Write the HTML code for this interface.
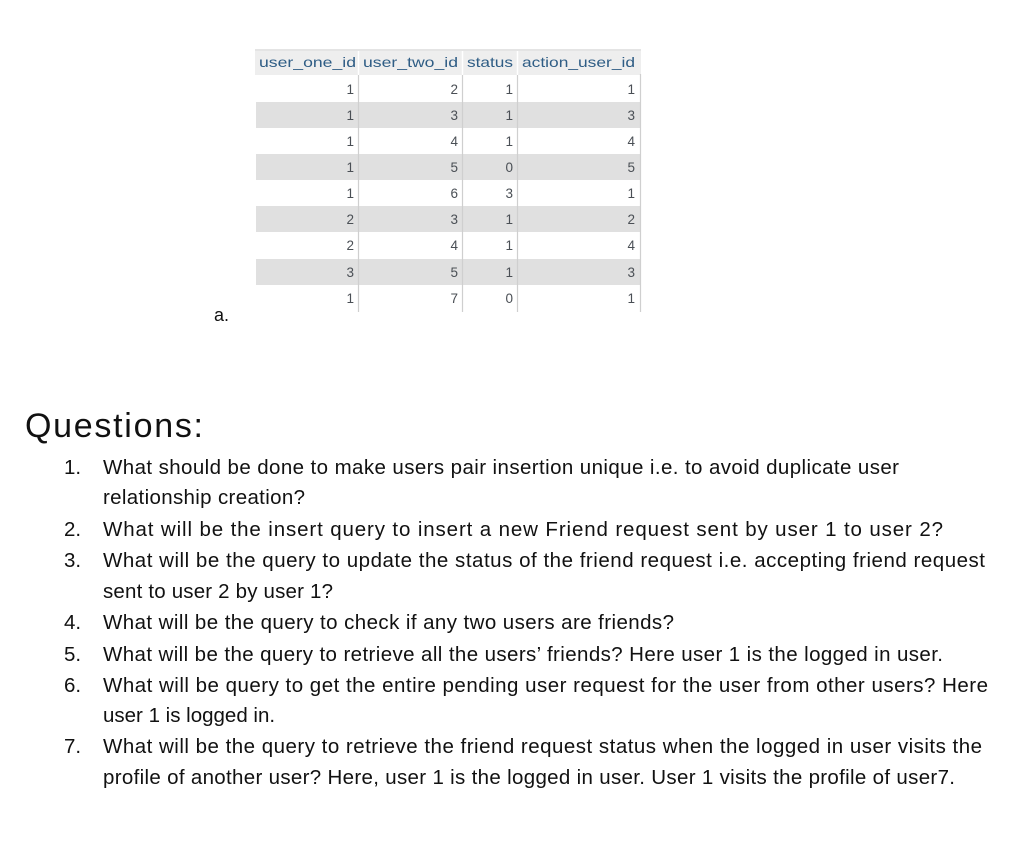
<!DOCTYPE html>
<html><head><meta charset="utf-8"><style>
html,body{margin:0;padding:0;background:#fff;width:1032px;height:851px;overflow:hidden}
svg{display:block}
.h{font-family:"Liberation Sans",Arial,sans-serif;font-size:14px;fill:#2f5d85}
.n{font-family:"Liberation Sans",Arial,sans-serif;font-size:13.5px;fill:#4a4f55;text-anchor:end}
.q{font-family:"Liberation Sans",sans-serif;font-size:20.5px;fill:#111}
</style></head><body>
<svg width="1032" height="851" xmlns="http://www.w3.org/2000/svg">
<rect x="255" y="49" width="386" height="2" fill="#e4e4e4"/>
<rect x="255" y="51" width="386" height="24" fill="#eeeeee"/>
<g>
<rect x="256" y="102" width="384" height="26" fill="#e0e0e0"/>
<rect x="256" y="154" width="384" height="26" fill="#e0e0e0"/>
<rect x="256" y="206" width="384" height="26" fill="#e0e0e0"/>
<rect x="256" y="259" width="384" height="26" fill="#e0e0e0"/>
</g>
<g stroke="#cfcfcf" stroke-width="1.2">
<line x1="358.5" y1="74" x2="358.5" y2="312"/>
<line x1="462.5" y1="74" x2="462.5" y2="312"/>
<line x1="517.5" y1="74" x2="517.5" y2="312"/>
<line x1="640.5" y1="74" x2="640.5" y2="312"/>
</g>
<g stroke="#ffffff" stroke-width="1.5">
<line x1="358.5" y1="51" x2="358.5" y2="75"/>
<line x1="462.5" y1="51" x2="462.5" y2="75"/>
<line x1="517.5" y1="51" x2="517.5" y2="75"/>
</g>
<text class="h" x="259" y="67" textLength="97" lengthAdjust="spacingAndGlyphs">user_one_id</text>
<text class="h" x="363" y="67" textLength="95" lengthAdjust="spacingAndGlyphs">user_two_id</text>
<text class="h" x="467" y="67" textLength="46" lengthAdjust="spacingAndGlyphs">status</text>
<text class="h" x="522" y="67" textLength="113" lengthAdjust="spacingAndGlyphs">action_user_id</text>
<g>
<text class="n" x="354" y="94">1</text><text class="n" x="458" y="94">2</text><text class="n" x="513" y="94">1</text><text class="n" x="635" y="94">1</text>
<text class="n" x="354" y="120">1</text><text class="n" x="458" y="120">3</text><text class="n" x="513" y="120">1</text><text class="n" x="635" y="120">3</text>
<text class="n" x="354" y="146">1</text><text class="n" x="458" y="146">4</text><text class="n" x="513" y="146">1</text><text class="n" x="635" y="146">4</text>
<text class="n" x="354" y="172">1</text><text class="n" x="458" y="172">5</text><text class="n" x="513" y="172">0</text><text class="n" x="635" y="172">5</text>
<text class="n" x="354" y="198">1</text><text class="n" x="458" y="198">6</text><text class="n" x="513" y="198">3</text><text class="n" x="635" y="198">1</text>
<text class="n" x="354" y="224">2</text><text class="n" x="458" y="224">3</text><text class="n" x="513" y="224">1</text><text class="n" x="635" y="224">2</text>
<text class="n" x="354" y="250">2</text><text class="n" x="458" y="250">4</text><text class="n" x="513" y="250">1</text><text class="n" x="635" y="250">4</text>
<text class="n" x="354" y="277">3</text><text class="n" x="458" y="277">5</text><text class="n" x="513" y="277">1</text><text class="n" x="635" y="277">3</text>
<text class="n" x="354" y="303">1</text><text class="n" x="458" y="303">7</text><text class="n" x="513" y="303">0</text><text class="n" x="635" y="303">1</text>
</g>
<text class="q" x="214" y="321" style="font-size:18px">a.</text>
<text class="q" x="25" y="437" style="font-size:34px" textLength="178" lengthAdjust="spacing">Questions:</text>
<g>
<text class="q" x="64" y="474">1.</text><text class="q" x="103" y="474" textLength="796" lengthAdjust="spacing">What should be done to make users pair insertion unique i.e. to avoid duplicate user</text>
<text class="q" x="103" y="504" textLength="202" lengthAdjust="spacing">relationship creation?</text>
<text class="q" x="64" y="536">2.</text><text class="q" x="103" y="536" textLength="840" lengthAdjust="spacing">What will be the insert query to insert a new Friend request sent by user 1 to user 2?</text>
<text class="q" x="64" y="567">3.</text><text class="q" x="103" y="567" textLength="882" lengthAdjust="spacing">What will be the query to update the status of the friend request i.e. accepting friend request</text>
<text class="q" x="103" y="598" textLength="230" lengthAdjust="spacing">sent to user 2 by user 1?</text>
<text class="q" x="64" y="629">4.</text><text class="q" x="103" y="629" textLength="571" lengthAdjust="spacing">What will be the query to check if any two users are friends?</text>
<text class="q" x="64" y="661">5.</text><text class="q" x="103" y="661" textLength="840" lengthAdjust="spacing">What will be the query to retrieve all the users’ friends? Here user 1 is the logged in user.</text>
<text class="q" x="64" y="692">6.</text><text class="q" x="103" y="692" textLength="885" lengthAdjust="spacing">What will be query to get the entire pending user request for the user from other users? Here</text>
<text class="q" x="103" y="722">user 1 is logged in.</text>
<text class="q" x="64" y="753">7.</text><text class="q" x="103" y="753" textLength="879" lengthAdjust="spacing">What will be the query to retrieve the friend request status when the logged in user visits the</text>
<text class="q" x="103" y="784" textLength="852" lengthAdjust="spacing">profile of another user? Here, user 1 is the logged in user. User 1 visits the profile of user7.</text>
</g>
</svg>
</body></html>
